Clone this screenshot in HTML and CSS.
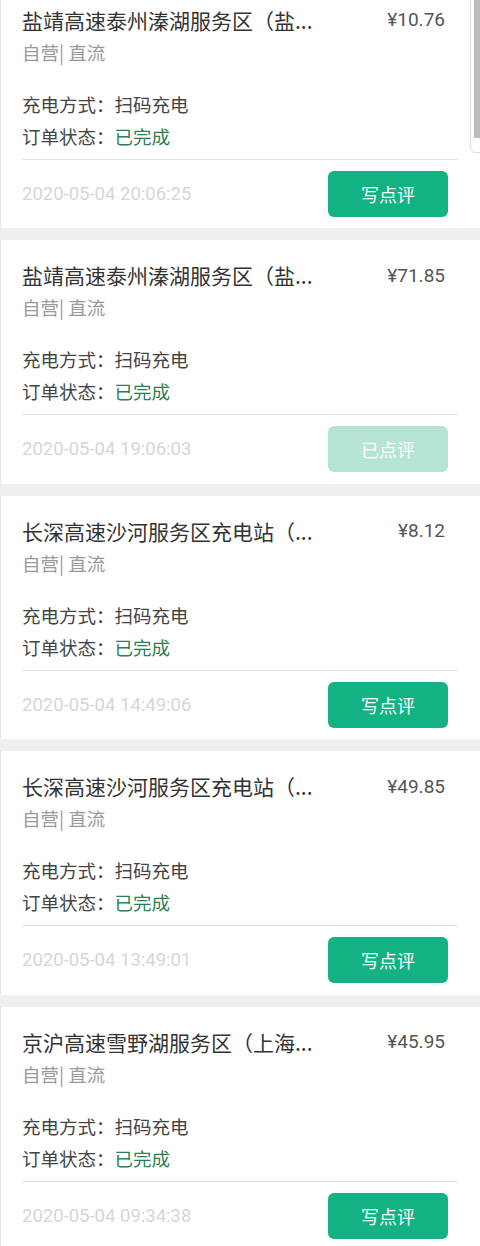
FILE: index.html
```html
<!DOCTYPE html>
<html lang="zh-CN">
<head>
<meta charset="utf-8">
<link rel="stylesheet" href="styles.css">
</head>
<body>
<div class="list">
  <div class="card">
    <div class="head"><span class="title">盐靖高速泰州溱湖服务区（盐...</span><span class="price">¥10.76</span></div>
    <div class="sub">自营| 直流</div>
    <div class="info">充电方式：扫码充电</div>
    <div class="info">订单状态：<span class="ok">已完成</span></div>
    <div class="foot"><span class="date">2020-05-04 20:06:25</span><span class="btn">写点评</span></div>
  </div>
  <div class="card">
    <div class="head"><span class="title">盐靖高速泰州溱湖服务区（盐...</span><span class="price">¥71.85</span></div>
    <div class="sub">自营| 直流</div>
    <div class="info">充电方式：扫码充电</div>
    <div class="info">订单状态：<span class="ok">已完成</span></div>
    <div class="foot"><span class="date">2020-05-04 19:06:03</span><span class="btn done">已点评</span></div>
  </div>
  <div class="card">
    <div class="head"><span class="title">长深高速沙河服务区充电站（...</span><span class="price">¥8.12</span></div>
    <div class="sub">自营| 直流</div>
    <div class="info">充电方式：扫码充电</div>
    <div class="info">订单状态：<span class="ok">已完成</span></div>
    <div class="foot"><span class="date">2020-05-04 14:49:06</span><span class="btn">写点评</span></div>
  </div>
  <div class="card">
    <div class="head"><span class="title">长深高速沙河服务区充电站（...</span><span class="price">¥49.85</span></div>
    <div class="sub">自营| 直流</div>
    <div class="info">充电方式：扫码充电</div>
    <div class="info">订单状态：<span class="ok">已完成</span></div>
    <div class="foot"><span class="date">2020-05-04 13:49:01</span><span class="btn">写点评</span></div>
  </div>
  <div class="card">
    <div class="head"><span class="title">京沪高速雪野湖服务区（上海...</span><span class="price">¥45.95</span></div>
    <div class="sub">自营| 直流</div>
    <div class="info">充电方式：扫码充电</div>
    <div class="info">订单状态：<span class="ok">已完成</span></div>
    <div class="foot"><span class="date">2020-05-04 09:34:38</span><span class="btn">写点评</span></div>
  </div>
</div>
<div class="scroll"><div class="thumb"></div></div>
</body>
</html>
```
FILE: styles.css
```css
html, body {
  margin: 0;
  padding: 0;
  background: #efefef;
  overflow: hidden;
}
body {
  width: 480px;
  height: 1246px;
  position: relative;
  font-family: Roboto, "Noto Sans CJK SC", sans-serif;
}
.list {
  margin-top: -15.5px;
  display: flex;
  flex-direction: column;
  gap: 12px;
}
.card {
  background: #fff;
  border-left: 1px solid #e4e4e4;
  padding: 19px 22px 12px 21px;
  height: 243.5px;
  box-sizing: border-box;
}
.head {
  display: flex;
  justify-content: space-between;
  align-items: center;
  height: 32px;
}
.title {
  font-family: "Noto Sans CJK SC", sans-serif;
  font-size: 21px;
  color: #333;
  white-space: nowrap;
}
.price {
  font-size: 19px;
  color: #555;
  margin-right: 13px;
}
.sub {
  font-family: "Noto Sans CJK SC", sans-serif;
  font-size: 18.5px;
  line-height: 32px;
  color: #9a9a9a;
}
.info {
  font-family: "Noto Sans CJK SC", sans-serif;
  font-size: 18.5px;
  line-height: 32px;
  color: #444;
}
.sub + .info {
  margin-top: 20px;
}
.ok {
  color: #2a7f55;
}
.foot {
  margin-top: 7px;
  border-top: 1px solid #e3e3e3;
  padding-top: 11px;
  display: flex;
  justify-content: space-between;
  align-items: center;
}
.date {
  font-size: 18.5px;
  color: #d6d6d6;
}
.btn {
  width: 120px;
  height: 46px;
  border-radius: 6px;
  background: #13b283;
  color: #fff;
  font-family: "Noto Sans CJK SC", sans-serif;
  font-size: 18px;
  display: flex;
  align-items: center;
  justify-content: center;
  margin-right: 10px;
}
.btn.done {
  background: #b6e4d2;
}
.scroll {
  position: absolute;
  top: -4px;
  right: -4px;
  width: 14px;
  height: 157px;
  border: 1px solid #dedede;
  border-radius: 0 0 0 5px;
  background: #fff;
  box-sizing: border-box;
}
.thumb {
  position: absolute;
  top: 0;
  right: 3px;
  width: 6px;
  height: 141px;
  background: #bdbdbd;
}
```
